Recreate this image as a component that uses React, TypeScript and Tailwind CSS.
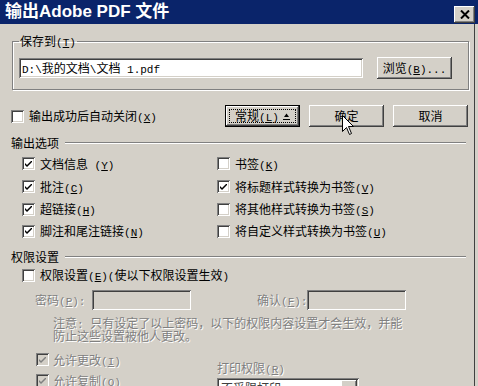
import React from "react";

const ASCII_CLS = "font-['Liberation_Mono','Noto_Sans_CJK_SC',monospace] text-[11px] leading-none";

function Txt({ s }: { s: string }) {
  const parts: { t: string; a: boolean; u?: boolean }[] = [];
  let i = 0;
  while (i < s.length) {
    const c = s[i];
    if (c === "&") {
      parts.push({ t: s[i + 1], a: true, u: true });
      i += 2;
      continue;
    }
    const ascii = c.charCodeAt(0) < 128;
    let j = i;
    while (j < s.length && s[j] !== "&" && (s.charCodeAt(j) < 128) === ascii) j++;
    parts.push({ t: s.slice(i, j), a: ascii });
    i = j;
  }
  return (
    <span className="whitespace-pre">
      {parts.map((p, k) =>
        p.a ? (
          <span key={k} className={p.u ? ASCII_CLS + " underline underline-offset-[1px]" : ASCII_CLS}>
            {p.t}
          </span>
        ) : (
          <span key={k}>{p.t}</span>
        )
      )}
    </span>
  );
}

function Check({ checked, disabled }: { checked?: boolean; disabled?: boolean }) {
  return (
    <span
      className={
        disabled
          ? "flex items-center justify-center w-[13px] h-[13px] shrink-0 bg-[#d4d0c8] shadow-[inset_1px_1px_#808080,inset_-1px_-1px_#fff,inset_2px_2px_#404040,inset_-2px_-2px_#d4d0c8]"
          : "flex items-center justify-center w-[13px] h-[13px] shrink-0 bg-white shadow-[inset_1px_1px_#808080,inset_-1px_-1px_#fff,inset_2px_2px_#404040,inset_-2px_-2px_#d4d0c8]"
      }
    >
      {checked && (
        <svg width="7" height="7" viewBox="0 0 7 7" className="mt-[1px]">
          <path d="M0 2 L0 4 L2 6 L7 1 L7 -1 L2 4 Z" fill={disabled ? "#808080" : "#000"} />
        </svg>
      )}
    </span>
  );
}

function Btn({ children, className }: { children: React.ReactNode; className?: string }) {
  return (
    <div
      className={
        "flex items-center justify-center w-[75px] h-[22px] bg-[#d4d0c8] shadow-[inset_-1px_-1px_#404040,inset_1px_1px_#fff,inset_-2px_-2px_#808080] " +
        (className || "")
      }
    >
      {children}
    </div>
  );
}

function SectionHeader({ label, className }: { label: string; className?: string }) {
  return (
    <div className={"flex items-center h-[16px] pl-[11px] pr-[12px] " + (className || "")}>
      <span>{label}</span>
      <div className="flex-1 ml-[6px] h-[2px] border-t border-t-[#808080] border-b border-b-white" />
    </div>
  );
}

function Row({ checked, label }: { checked?: boolean; label: string }) {
  return (
    <div className="flex items-center gap-[5px]">
      <Check checked={checked} />
      <Txt s={label} />
    </div>
  );
}

const DIS = "text-[#808080] [text-shadow:1px_1px_0_#fff]";
const SUNKEN = "shadow-[inset_1px_1px_#808080,inset_-1px_-1px_#fff,inset_2px_2px_#404040,inset_-2px_-2px_#d4d0c8]";

export default function App() {
  return (
    <div className="relative w-[478px] h-[386px] overflow-hidden bg-[#d4d0c8] flex flex-col text-black font-['Noto_Sans_CJK_SC','Liberation_Sans',sans-serif] text-[12px] leading-[16px]">
      {/* Title bar */}
      <div className="h-[24px] shrink-0 bg-[#0a246a] flex items-center justify-between pl-[5px] pr-[3px]">
        <span className="text-white font-bold text-[17px] leading-[20px] font-['Liberation_Sans','Noto_Sans_CJK_SC',sans-serif]">
          输出Adobe PDF 文件
        </span>
        <div className="mt-[4px] w-[21px] h-[17px] flex items-center justify-center bg-[#d4d0c8] shadow-[inset_-1px_-1px_#404040,inset_1px_1px_#fff,inset_-2px_-2px_#808080]">
          <svg width="10" height="9" viewBox="0 0 10 9">
            <path d="M1 0.5 L9 8.5 M9 0.5 L1 8.5" stroke="#000" strokeWidth="2" />
          </svg>
        </div>
      </div>

      {/* Body */}
      <div className="flex-1 flex flex-col shadow-[inset_-3px_0_#d4d0c8,inset_-4px_0_#404040]">
        <div className="pt-[9px] pl-[12px]">
          <fieldset className="w-[457px] border border-[#808080] shadow-[inset_1px_1px_#fff,1px_1px_#fff] pl-[6px] pt-[8px] pb-[10px] flex items-center">
            <legend className="px-[1px] h-[16px] leading-[16px]">
              <Txt s="保存到(&T)" />
            </legend>
            <div className={"w-[344px] h-[20px] bg-white flex items-center pl-[3px] " + SUNKEN}>
              <Txt s="D:\我的文档\文档 1.pdf" />
            </div>
            <Btn className="ml-[14px]">
              <Txt s="浏览(&B)..." />
            </Btn>
          </fieldset>
        </div>

        {/* Auto close + buttons */}
        <div className="mt-[15px] h-[22px] flex items-center pl-[11px] pr-[10px]">
          <Check />
          <span className="ml-[5px]">
            <Txt s="输出成功后自动关闭(&X)" />
          </span>
          <div className="ml-auto flex gap-[9px]">
            <div className="w-[75px] h-[22px] border border-black bg-[#d4d0c8] shadow-[inset_-1px_-1px_#404040,inset_1px_1px_#fff,inset_-2px_-2px_#808080] p-[3px] flex">
              <div className="flex-1 border border-dotted border-black flex items-center justify-center gap-[4px]">
                <Txt s="常规(&L)" />
                <svg width="7" height="7" viewBox="0 0 7 7">
                  <path d="M3.5 0.5 L6 4 L1 4 Z" fill="#000" />
                  <rect x="0" y="6" width="7" height="1" fill="#000" />
                </svg>
              </div>
            </div>
            <Btn>确定</Btn>
            <Btn>取消</Btn>
          </div>
        </div>

        {/* Output options */}
        <SectionHeader label="输出选项" className="mt-[8px]" />
        <div className="mt-[1px] grid grid-cols-[195px_1fr] grid-rows-[23px_23px_22px_22px] pl-[22px]">
          <Row checked label="文档信息 (&Y)" />
          <Row label="书签(&K)" />
          <Row checked label="批注(&C)" />
          <Row checked label="将标题样式转换为书签(&V)" />
          <Row checked label="超链接(&H)" />
          <Row label="将其他样式转换为书签(&S)" />
          <Row checked label="脚注和尾注链接(&N)" />
          <Row label="将自定义样式转换为书签(&U)" />
        </div>

        {/* Permissions */}
        <SectionHeader label="权限设置" className="mt-[7px]" />
        <div className="h-[20px] flex items-center gap-[5px] pl-[22px]">
          <Check />
          <Txt s="权限设置(&E)(使以下权限设置生效)" />
        </div>

        <div className={"mt-[5px] h-[20px] flex items-center pl-[35px] " + DIS}>
          <span className="w-[57px]">
            <Txt s="密码(&P):" />
          </span>
          <div className={"w-[99px] h-[20px] bg-[#d4d0c8] " + SUNKEN} />
          <span className="ml-[66px] w-[50px]">
            <Txt s="确认(&F):" />
          </span>
          <div className={"w-[99px] h-[20px] bg-[#d4d0c8] " + SUNKEN} />
        </div>

        <div className={"mt-[6px] pl-[53px] leading-[13px] " + DIS}>
          <div className="h-[13px]">
            <Txt s="注意: 只有设定了以上密码，以下的权限内容设置才会生效，并能" />
          </div>
          <div className="h-[13px]">防止这些设置被他人更改。</div>
        </div>

        <div className="mt-[7px] flex">
          <div className={"w-[217px] pl-[36px] flex flex-col " + DIS}>
            <div className="h-[21px] flex items-center gap-[4px]">
              <Check checked disabled />
              <Txt s="允许更改(&I)" />
            </div>
            <div className="h-[21px] flex items-center gap-[4px]">
              <Check checked disabled />
              <Txt s="允许复制(&O)" />
            </div>
          </div>
          <div className="flex flex-col">
            <div className={"mt-[11px] h-[16px] " + DIS}>
              <Txt s="打印权限(&R)" />
            </div>
            <div className={"mt-[2px] w-[142px] h-[20px] bg-white flex items-center pl-[4px] pr-[2px] " + SUNKEN}>
              <span className="flex-1 text-[#404040]">不受限打印</span>
              <div className="w-[16px] h-[16px] bg-[#d4d0c8] shadow-[inset_-1px_-1px_#404040,inset_1px_1px_#fff,inset_-2px_-2px_#808080]" />
            </div>
          </div>
        </div>
      </div>

      {/* Mouse cursor */}
      <svg className="absolute left-[342px] top-[115px]" width="13" height="21" viewBox="0 0 13 21">
        <path
          d="M0.5 0.5 L0.5 16.5 L4.5 12.5 L7.5 19.5 L9.5 18.5 L6.5 11.5 L11.5 11.5 Z"
          fill="#fff"
          stroke="#000"
          strokeWidth="1"
        />
      </svg>
    </div>
  );
}
